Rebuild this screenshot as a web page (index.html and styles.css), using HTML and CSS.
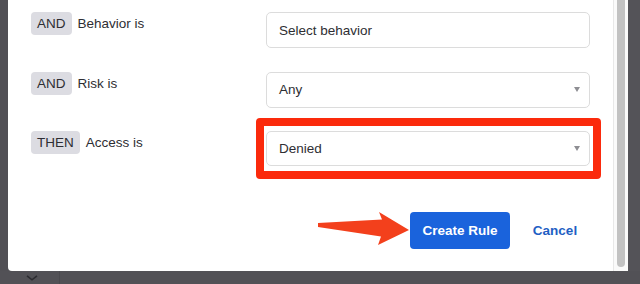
FILE: index.html
```html
<!DOCTYPE html>
<html>
<head>
<meta charset="utf-8">
<link rel="stylesheet" href="styles.css">
</head>
<body>
<div class="screen">
  <div class="top">
    <div class="gutter-left"></div>
    <div class="panel">
      <div class="content">
        <div class="row">
          <div class="cond"><span class="badge">AND</span><span class="label">Behavior is</span></div>
          <div class="field"><span>Select behavior</span></div>
        </div>
        <div class="row">
          <div class="cond"><span class="badge">AND</span><span class="label">Risk is</span></div>
          <div class="field"><span>Any</span><span class="caret"></span></div>
        </div>
        <div class="row">
          <div class="cond"><span class="badge">THEN</span><span class="label">Access is</span></div>
          <div class="field highlighted"><span>Denied</span><span class="caret"></span><span class="callout"></span></div>
        </div>
        <div class="actions">
          <svg class="pointer" width="100" height="40" viewBox="0 0 100 40">
            <polygon points="0,11 64,7.5 61,0 91,18 60,33 63,24.5 0,15" fill="#f3401c"/>
          </svg>
          <button class="btn primary">Create Rule</button>
          <button class="btn link">Cancel</button>
        </div>
      </div>
      <div class="scrollbar"><div class="thumb"></div></div>
    </div>
    <div class="gutter-right"></div>
  </div>
  <div class="bottom">
    <div class="bottom-tab">
      <svg width="12" height="6" viewBox="0 0 12 6"><polyline points="1,0.8 6,4.8 11,0.8" fill="none" stroke="#2b2b30" stroke-width="1.6"/></svg>
    </div>
  </div>
</div>
</body>
</html>
```

FILE: styles.css
```css
* { box-sizing: border-box; }
html, body { margin: 0; padding: 0; }
body {
  background: #545358;
  font-family: "Liberation Sans", Arial, sans-serif;
  width: 640px;
  height: 284px;
  overflow: hidden;
}
.screen {
  display: flex;
  flex-direction: column;
  width: 640px;
  height: 284px;
}
.top {
  display: flex;
  height: 271px;
}
.gutter-left {
  width: 8px;
  background: #515055;
}
.gutter-right {
  width: 12px;
  background: #545358;
}
.panel {
  flex: 1;
  display: flex;
  background: #fff;
  border-bottom-left-radius: 4px;
}
.content {
  flex: 1;
  padding: 12px 23px 0 23px;
  display: flex;
  flex-direction: column;
}
.row {
  display: flex;
  align-items: flex-start;
  margin-bottom: 23.5px;
}
.cond {
  width: 235px;
  display: flex;
  align-items: center;
  gap: 6px;
  height: 23px;
}
.badge {
  display: inline-flex;
  align-items: center;
  height: 23px;
  padding: 0 6px;
  background: #dcdce2;
  border-radius: 4px;
  color: #2e2e33;
  font-size: 13.5px;
}
.label {
  color: #2e2e33;
  font-size: 13.5px;
}
.field {
  position: relative;
  width: 324px;
  height: 36px;
  border: 1px solid #dcdcdc;
  border-radius: 5px;
  display: flex;
  align-items: center;
  justify-content: space-between;
  padding: 0 9px 0 12px;
  font-size: 13.5px;
  color: #2e2e33;
}
.highlighted { height: 35px; }
.caret {
  width: 0;
  height: 0;
  border-left: 3.5px solid transparent;
  border-right: 3.5px solid transparent;
  border-top: 5px solid #8e8e93;
}
.callout {
  position: absolute;
  left: -11px;
  right: -12px;
  top: -14px;
  bottom: -14px;
  border: 8px solid #fb2a0c;
  border-radius: 4px;
}
.actions {
  position: relative;
  display: flex;
  justify-content: flex-end;
  align-items: center;
  gap: 10px;
  margin-top: 22px;
}
.pointer {
  position: absolute;
  left: 287px;
  top: 0;
}
.btn {
  font-family: "Liberation Sans", Arial, sans-serif;
  font-size: 13.5px;
  font-weight: bold;
  height: 37px;
  border: none;
  border-radius: 4px;
  cursor: pointer;
}
.primary {
  width: 100px;
  background: #1a63dc;
  color: #fff;
}
.link {
  width: 70px;
  background: transparent;
  color: #1f5fc4;
  padding: 0;
}
.scrollbar {
  width: 15px;
  border-left: 1px solid #e8e8e8;
  background: #fafafa;
  padding: 0 3px 3px 3px;
}
.thumb {
  height: 267px;
  background: #c2c2c2;
  border-radius: 0 0 4px 4px;
  width: 8px;
}
.bottom {
  height: 13px;
  display: flex;
  background: #525156;
}
.bottom-tab {
  width: 60px;
  border-right: 1px solid #4a494e;
  display: flex;
  justify-content: center;
  padding-top: 4px;
  padding-right: 0;
}
.bottom-tab svg { margin-left: 4px; }
```
